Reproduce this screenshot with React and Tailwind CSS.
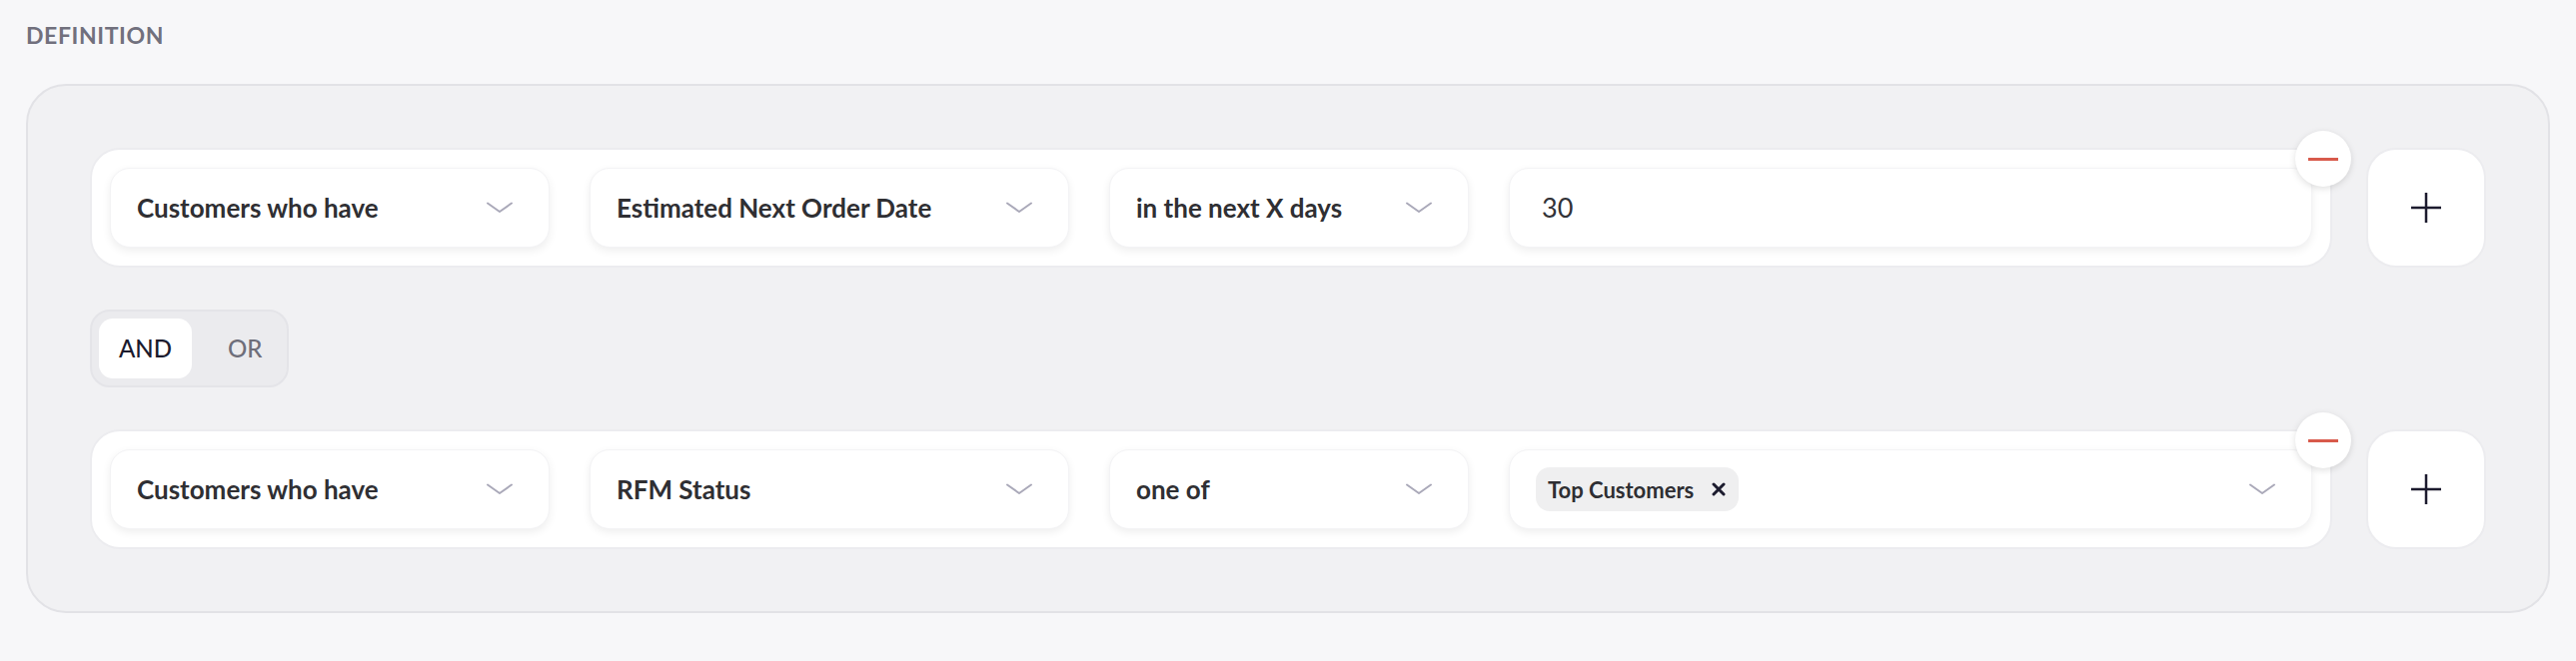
import React from "react";

const ChevronDown = () => (
  <svg width="26" height="12" viewBox="0 0 26 12" fill="none">
    <path d="M1 1.5 L13 10 L25 1.5" stroke="#aaa9b9" strokeWidth="2" strokeLinecap="round" strokeLinejoin="round" />
  </svg>
);

const PlusIcon = () => (
  <svg width="32" height="32" viewBox="0 0 32 32" fill="none">
    <path d="M16 1 V31 M1 16 H31" stroke="#1c1b2e" strokeWidth="2.5" />
  </svg>
);

const CloseIcon = () => (
  <svg width="14" height="14" viewBox="0 0 14 14" fill="none">
    <path d="M2 2 L12 12 M12 2 L2 12" stroke="#1c1b2e" strokeWidth="3" strokeLinecap="round" />
  </svg>
);

function Select({ label, width }) {
  return (
    <button
      type="button"
      className={`${width} h-[80px] shrink-0 rounded-[20px] bg-white border border-[#f3f3f5] shadow-[0_3px_8px_rgba(0,0,0,0.07)] flex items-center justify-between pl-[26px] pr-[36px] text-[26px] font-bold text-[#2f2f33]`}
    >
      <span>{label}</span>
      <ChevronDown />
    </button>
  );
}

function Row({ fields, children }) {
  return (
    <div className="flex gap-[34px]">
      <div className="relative flex-1 rounded-[30px] bg-white border-2 border-[#ececef] p-[18px] flex gap-[40px]">
        <Select label={fields[0]} width="w-[440px]" />
        <Select label={fields[1]} width="w-[480px]" />
        <Select label={fields[2]} width="w-[360px]" />
        <div className="flex-1 h-[80px] rounded-[20px] bg-white border border-[#f3f3f5] shadow-[0_3px_8px_rgba(0,0,0,0.07)] flex items-center">
          {children}
        </div>
        <button
          type="button"
          className="absolute -top-[19px] -right-[21px] w-[56px] h-[56px] rounded-full bg-white shadow-[0_2px_7px_rgba(0,0,0,0.13)] flex items-center justify-center"
        >
          <span className="block w-[30px] h-[3px] bg-[#d85a4b]" />
        </button>
      </div>
      <button
        type="button"
        className="w-[120px] h-[120px] shrink-0 rounded-[30px] bg-white border-2 border-[#ececef] flex items-center justify-center"
      >
        <PlusIcon />
      </button>
    </div>
  );
}

export default function App() {
  return (
    <div className="min-h-screen bg-[#f7f7f9] px-[26px] pt-[19px] font-['Lato','Noto_Sans',sans-serif]">
      <div className="text-[23px] leading-[32px] font-bold tracking-[0.6px] text-[#71707d]">DEFINITION</div>

      <div className="mt-[33px] rounded-[40px] border-2 border-[#e2e2e6] bg-[#f1f1f3] p-[62px] flex flex-col gap-[42px]">
        <Row fields={["Customers who have", "Estimated Next Order Date", "in the next X days"]}>
          <span className="pl-[32px] text-[27px] text-[#333338]">30</span>
        </Row>

        <div className="self-start flex rounded-[20px] border-2 border-[#e4e4e8] bg-[#ebebee] p-[7px]">
          <button type="button" className="w-[93px] h-[60px] rounded-[14px] bg-white text-[24px] font-medium text-[#1c1b2e]">
            AND
          </button>
          <button type="button" className="w-[88px] h-[60px] rounded-[14px] flex items-center pl-[36px] text-[24px] font-medium text-[#6e6e7a]">
            OR
          </button>
        </div>

        <Row fields={["Customers who have", "RFM Status", "one of"]}>
          <div className="flex-1 flex items-center justify-between pl-[26px] pr-[36px]">
            <span className="h-[44px] rounded-[14px] bg-[#efeff0] pl-[12px] pr-[13px] flex items-center gap-[18px] text-[22px] font-bold text-[#2e2e33]">
              Top Customers
              <CloseIcon />
            </span>
            <ChevronDown />
          </div>
        </Row>
      </div>
    </div>
  );
}
